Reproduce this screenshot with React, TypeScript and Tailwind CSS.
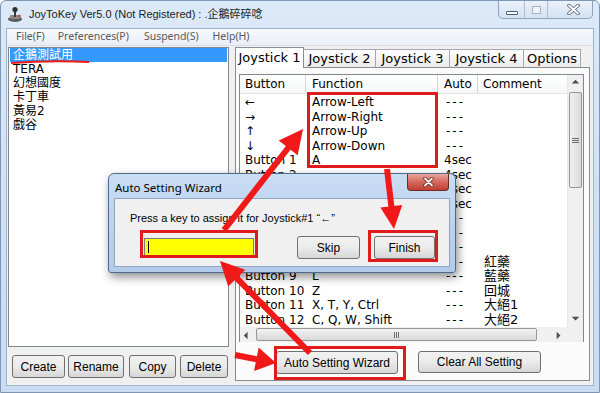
import React from "react";

const UI = "font-['DejaVu_Sans','Noto_Sans_CJK_TC',sans-serif]";
const SEG = "font-['Noto_Sans','Noto_Sans_CJK_TC',sans-serif]";
const BTN = "font-['Liberation_Sans','Noto_Sans_CJK_TC',sans-serif]";

const PROFILES = ["企鵝測試用", "TERA", "幻想國度", "卡丁車", "黃易2", "戲谷"];
const TABS = [
  { label: "Joystick 1", w: "w-[69px]" },
  { label: "Joystick 2", w: "w-[72px]" },
  { label: "Joystick 3", w: "w-[74px]" },
  { label: "Joystick 4", w: "w-[74px]" },
  { label: "Options", w: "w-[57px]" },
];

// rows behind the wizard dialog keep their labels; hidden function cells are left blank
const ROWS = [
  { b: "←", f: "Arrow-Left", a: "---", c: "" },
  { b: "→", f: "Arrow-Right", a: "---", c: "" },
  { b: "↑", f: "Arrow-Up", a: "---", c: "" },
  { b: "↓", f: "Arrow-Down", a: "---", c: "" },
  { b: "Button 1", f: "A", a: "4sec", c: "" },
  { b: "Button 2", f: "", a: "4sec", c: "" },
  { b: "Button 3", f: "", a: "4sec", c: "" },
  { b: "Button 4", f: "", a: "4sec", c: "" },
  { b: "Button 5", f: "", a: "---", c: "" },
  { b: "Button 6", f: "", a: "---", c: "" },
  { b: "Button 7", f: "", a: "---", c: "" },
  { b: "Button 8", f: "", a: "---", c: "紅藥" },
  { b: "Button 9", f: "L", a: "---", c: "藍藥" },
  { b: "Button 10", f: "Z", a: "---", c: "回城" },
  { b: "Button 11", f: "X, T, Y, Ctrl", a: "---", c: "大絕1" },
  { b: "Button 12", f: "C, Q, W, Shift", a: "---", c: "大絕2" },
];

function WinButton({ label, className = "" }: { label: string; className?: string }) {
  return (
    <div
      className={`flex items-center justify-center border border-[#707070] rounded-[3px] bg-gradient-to-b from-[#f2f2f2] via-[#ebebeb] to-[#d6d6d6] text-[12px] text-black ${BTN} ${className}`}
    >
      {label}
    </div>
  );
}

// red annotation arrow: shaft + filled head
function Arrow({ x1, y1, x2, y2, len = 22, half = 11 }: { x1: number; y1: number; x2: number; y2: number; len?: number; half?: number }) {
  const dx = x2 - x1;
  const dy = y2 - y1;
  const d = Math.hypot(dx, dy);
  const ux = dx / d;
  const uy = dy / d;
  const bx = x2 - ux * len;
  const by = y2 - uy * len;
  const px = -uy * half;
  const py = ux * half;
  return (
    <g>
      <line x1={x1} y1={y1} x2={bx + ux * 4} y2={by + uy * 4} stroke="#f01818" strokeWidth={6} />
      <polygon points={`${x2},${y2} ${bx + px},${by + py} ${bx - px},${by - py}`} fill="#f01818" />
    </g>
  );
}

function ScrollArrow({ dir }: { dir: "up" | "down" | "left" | "right" }) {
  const pts = {
    up: "4,7 8,3 12,7",
    down: "4,5 8,9 12,5",
    left: "7,4 3,8 7,12",
    right: "5,4 9,8 5,12",
  }[dir];
  return (
    <svg width="15" height="15" viewBox="0 0 16 14">
      <polygon points={pts} fill="#4d4d4d" />
    </svg>
  );
}

export default function App() {
  return (
    <div className="relative w-[600px] h-[393px] overflow-hidden bg-gradient-to-b from-[#dce9f8] via-[#d0e1f4] to-[#c9dcf2] border border-[#7f96b3] rounded-t-[6px]">
      {/* Title bar */}
      <div className="h-[27px] flex items-start">
        <div className="flex items-center h-[27px] pl-[6px] gap-[5px]">
          <svg width="17" height="17" viewBox="0 0 17 17">
            <ellipse cx="8" cy="13" rx="7" ry="3" fill="#5c5c5c" />
            <rect x="3" y="9" width="10" height="4" rx="1" fill="#8a8a8a" />
            <rect x="7" y="3" width="2" height="8" fill="#3a3a3a" />
            <circle cx="8" cy="3.5" r="2.6" fill="#303030" />
            <circle cx="12.5" cy="10" r="1.3" fill="#d23a3a" />
          </svg>
          <span className={`text-[11px] text-[#1b1b1b] ${BTN}`}>JoyToKey Ver5.0 (Not Registered) : .企鵝碎碎唸</span>
        </div>
        <div className="ml-auto mr-[6px] flex h-[18px] border border-t-0 border-[#8ea3bd] rounded-b-[5px] overflow-hidden bg-gradient-to-b from-[#eaf1fa] to-[#d3e2f3]">
          <div className="w-[26px] flex items-center justify-center border-r border-[#a9bcd3]">
            <div className="w-[12px] h-[4px] mt-[6px] border border-[#4a5a70] bg-white rounded-[1px]" />
          </div>
          <div className="w-[23px] flex items-center justify-center border-r border-[#a9bcd3]">
            <div className="w-[9px] h-[8px] border border-[#a7b3c2] bg-[#eef3f9]" />
          </div>
          <div className="w-[44px] flex items-center justify-center pl-[6px]">
            <svg width="13" height="11" viewBox="0 0 13 11">
              <path d="M2 1.5 L11 9.5 M11 1.5 L2 9.5" stroke="#55657a" strokeWidth="3.6" strokeLinecap="round" />
              <path d="M2 1.5 L11 9.5 M11 1.5 L2 9.5" stroke="#ffffff" strokeWidth="1.8" strokeLinecap="round" />
            </svg>
          </div>
        </div>
      </div>

      {/* Client area */}
      <div className="mx-[5px] h-[358px] border border-[#9fb3cb] bg-[#f0f0f0] flex flex-col">
        {/* Menu bar */}
        <div className={`h-[16px] flex items-center pl-[9px] bg-gradient-to-b from-[#f7f9fd] to-[#e9eef6] text-[10.5px] text-[#5a5a5a] ${SEG}`}>
          <span>File(F)</span>
          <span className="ml-[13px]">Preferences(P)</span>
          <span className="ml-[15px]">Suspend(S)</span>
          <span className="ml-[14px]">Help(H)</span>
        </div>

        {/* Body */}
        <div className="flex flex-1 pt-[1px] border-t border-[#d9dee6]">
          {/* Left: profile list */}
          <div className="ml-[1px] w-[221px] flex flex-col">
            <div className={`h-[300px] border border-[#828790] bg-white text-[12px] ${UI}`}>
              {PROFILES.map((p, i) => (
                <div
                  key={p}
                  className={`h-[14px] leading-[14px] pl-[3px] mx-[1px] ${i === 0 ? "bg-[#3399ff] text-white" : "text-black"}`}
                >
                  {p}
                </div>
              ))}
            </div>
            <div className="flex mt-[8px] pl-[4px] gap-[3px]">
              <WinButton label="Create" className="w-[53px] h-[23px]" />
              <WinButton label="Rename" className="w-[56px] h-[23px]" />
              <WinButton label="Copy" className="w-[47px] ml-[2px] h-[23px]" />
              <WinButton label="Delete" className="w-[48px] ml-[1px] h-[23px]" />
            </div>
          </div>

          {/* Right: tabs */}
          <div className="ml-[6px] w-[355px] flex flex-col">
            <div className={`flex items-end h-[20px] ${UI} text-[13px] text-black`}>
              {TABS.map((t, i) =>
                i === 0 ? (
                  <div
                    key={t.label}
                    className={`${t.w} h-[21px] -mb-[1px] relative z-10 flex items-center justify-center bg-white border border-b-0 border-[#898c95]`}
                  >
                    {t.label}
                  </div>
                ) : (
                  <div
                    key={t.label}
                    className={`${t.w} h-[18px] flex items-center justify-center bg-gradient-to-b from-[#fdfdfd] to-[#ececec] border border-b-0 border-l-0 border-[#a4a7ae]`}
                  >
                    {t.label}
                  </div>
                )
              )}
            </div>
            <div className="h-[314px] border border-[#898c95] bg-[#fbfbfb] flex flex-col">
              {/* List view */}
              <div className={`mt-[6px] ml-[3px] w-[345px] h-[268px] border border-[#828790] bg-white flex flex-col ${UI} text-[12px] text-black`}>
                <div className="flex h-[252px]">
                  <div className="w-[327px] flex flex-col">
                    <div className="h-[19px] flex border-b border-[#e5e5e5] bg-gradient-to-b from-white to-[#f5f6f7]">
                      <div className="w-[66px] pl-[5px] leading-[19px] border-r border-[#d5d5d5]">Button</div>
                      <div className="w-[132px] pl-[6px] leading-[19px] border-r border-[#d5d5d5]">Function</div>
                      <div className="w-[40px] pl-[6px] leading-[19px] border-r border-[#d5d5d5]">Auto</div>
                      <div className="flex-1 pl-[5px] leading-[19px]">Comment</div>
                    </div>
                    <div className="pt-[1px]">
                      {ROWS.map((r) => (
                        <div key={r.b} className="h-[14.5px] flex leading-[14.5px] whitespace-nowrap">
                          <div className="w-[66px] pl-[5px]">{r.b}</div>
                          <div className="w-[132px] pl-[6px]">{r.f}</div>
                          <div className={`w-[40px] pl-[6px] ${r.a === "---" ? "tracking-[2px] pl-[8px]" : ""}`}>{r.a}</div>
                          <div className="flex-1 pl-[6px] text-[13px]">{r.c}</div>
                        </div>
                      ))}
                    </div>
                  </div>
                  {/* vertical scrollbar */}
                  <div className="w-[16px] bg-[#f0f0f0] border-l border-[#e8e8e8] flex flex-col">
                    <div className="h-[17px] flex items-center justify-center">
                      <ScrollArrow dir="up" />
                    </div>
                    <div className="mx-[1px] h-[96px] border border-[#979797] rounded-[2px] bg-gradient-to-r from-[#f2f2f2] to-[#d9d9d9] flex items-center justify-center">
                      <div className="flex flex-col gap-[1px]">
                        <div className="w-[7px] h-[1px] bg-[#6d6d6d]" />
                        <div className="w-[7px] h-[1px] bg-[#6d6d6d]" />
                        <div className="w-[7px] h-[1px] bg-[#6d6d6d]" />
                      </div>
                    </div>
                    <div className="flex-1" />
                    <div className="h-[17px] flex items-center justify-center">
                      <ScrollArrow dir="down" />
                    </div>
                  </div>
                </div>
                {/* horizontal scrollbar */}
                <div className="h-[15px] flex bg-[#f0f0f0]">
                  <div className="w-[16px] flex items-center justify-center">
                    <ScrollArrow dir="left" />
                  </div>
                  <div className="w-[281px] my-[1px] border border-[#979797] rounded-[2px] bg-gradient-to-b from-[#f2f2f2] to-[#d9d9d9] flex items-center justify-center">
                    <div className="flex gap-[1px]">
                      <div className="w-[1px] h-[6px] bg-[#6d6d6d]" />
                      <div className="w-[1px] h-[6px] bg-[#6d6d6d]" />
                      <div className="w-[1px] h-[6px] bg-[#6d6d6d]" />
                    </div>
                  </div>
                  <div className="flex-1" />
                  <div className="w-[16px] flex items-center justify-center">
                    <ScrollArrow dir="right" />
                  </div>
                  <div className="w-[16px] bg-[#f0f0f0]" />
                </div>
              </div>
              <div className="flex mt-[9px] pl-[40px] gap-[20px]">
                <WinButton label="Auto Setting Wizard" className="w-[122px] h-[23px] text-[12.5px]" />
                <WinButton label="Clear All Setting" className="w-[123px] h-[22px] text-[12.5px]" />
              </div>
            </div>
          </div>
        </div>
      </div>

      {/* Auto Setting Wizard dialog */}
      <div className="absolute left-[107px] top-[172px] w-[348px] h-[100px] rounded-t-[6px] rounded-b-[3px] border border-[#4d6a8e] bg-gradient-to-b from-[#c9ddf4] via-[#bcd3ee] to-[#b3cbe8] shadow-[2px_4px_10px_rgba(0,0,0,0.45)] flex flex-col">
        <div className="h-[24px] flex items-start">
          <span className={`pl-[6px] pt-[5px] text-[11.5px] text-black ${SEG}`}>Auto Setting Wizard</span>
          <div className="ml-auto mr-[6px] w-[42px] h-[17px] rounded-b-[4px] border border-t-0 border-[#6e2b26] bg-gradient-to-b from-[#e8a89f] via-[#d3675c] to-[#c23d33] flex items-center justify-center">
            <svg width="11" height="10" viewBox="0 0 11 10">
              <path d="M2 1.5 L9 8.5 M9 1.5 L2 8.5" stroke="#6b2420" strokeWidth="3.4" strokeLinecap="round" />
              <path d="M2 1.5 L9 8.5 M9 1.5 L2 8.5" stroke="#ffffff" strokeWidth="1.8" strokeLinecap="round" />
            </svg>
          </div>
        </div>
        <div className="mx-[5px] h-[69px] border border-[#8ea6c4] bg-[#f0f0f0] flex flex-col">
          <div className={`pl-[15px] pt-[12px] text-[11px] leading-[14px] text-black ${BTN}`}>
            Press a key to assign it for Joystick#1 “←”
          </div>
          <div className="flex items-center mt-[9px] pl-[29px]">
            <div className="w-[110px] h-[18px] border border-[#7a7a7a] bg-[#ffff00] flex items-center pl-[3px]">
              <div className="w-[1px] h-[12px] bg-black" />
            </div>
            <WinButton label="Skip" className="w-[63px] h-[23px] ml-[43px] mt-[2px]" />
            <WinButton label="Finish" className="w-[61px] h-[23px] ml-[14px] mt-[2px]" />
          </div>
        </div>
      </div>

      {/* Red annotations */}
      <svg className="absolute inset-0 pointer-events-none" width="600" height="393" viewBox="0 0 600 393">
        <path d="M10 62 Q50 59 88 61" stroke="#f01818" strokeWidth="2" fill="none" />
        <rect x="307.5" y="92.5" width="128" height="73" fill="none" stroke="#e01b1b" strokeWidth="3" />
        <rect x="140.5" y="230.5" width="115" height="25" fill="none" stroke="#e01b1b" strokeWidth="3" />
        <rect x="368.5" y="230.5" width="67" height="29" fill="none" stroke="#e01b1b" strokeWidth="3" />
        <rect x="274.5" y="346.5" width="129" height="31" fill="none" stroke="#e01b1b" strokeWidth="3" />
        <Arrow x1={223} y1={229} x2={302} y2={128} len={24} half={12} />
        <Arrow x1={386} y1={168} x2={393} y2={228} len={23} half={11} />
        <Arrow x1={309} y1={352} x2={219} y2={260} len={24} half={12} />
        <Arrow x1={234} y1={354} x2={275} y2={362} len={20} half={12} />
      </svg>
    </div>
  );
}
